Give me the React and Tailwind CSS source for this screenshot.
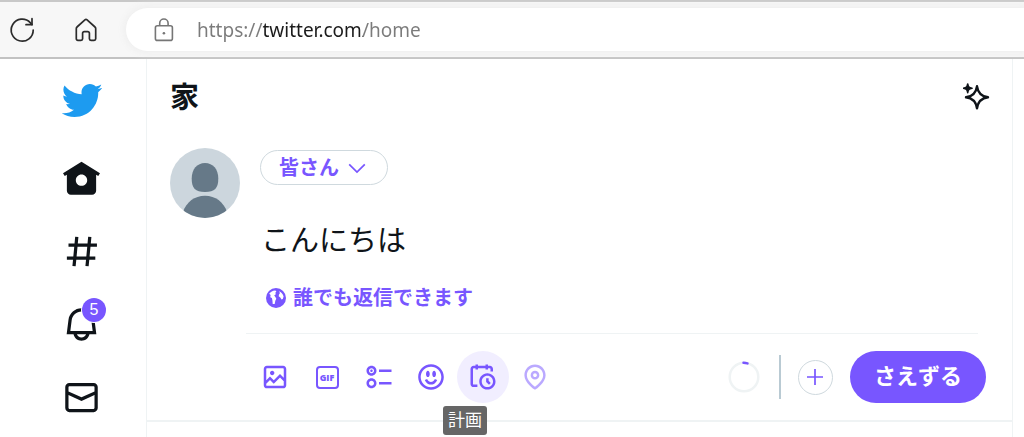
import React, { useState } from 'react';

const toolbarIcons = {
  image:
    'M3 5.5C3 4.119 4.119 3 5.5 3h13C19.881 3 21 4.119 21 5.5v13c0 1.381-1.119 2.5-2.5 2.5h-13C4.119 21 3 19.881 3 18.5v-13zM5.5 5c-.276 0-.5.224-.5.5v9.086l3-3 3 3 5-5 3 3V5.5c0-.276-.224-.5-.5-.5h-13zM19 15.414l-3-3-5 5-3-3-3 3V18.5c0 .276.224.5.5.5h13c.276 0 .5-.224.5-.5v-3.086zM9.75 7C8.784 7 8 7.784 8 8.75s.784 1.75 1.75 1.75 1.75-.784 1.75-1.75S10.716 7 9.75 7z',
  poll:
    'M6 5c-1.1 0-2 .895-2 2s.9 2 2 2 2-.895 2-2-.9-2-2-2zM2 7c0-2.209 1.79-4 4-4s4 1.791 4 4-1.79 4-4 4-4-1.791-4-4zm20 1H12V6h10v2zM6 15c-1.1 0-2 .895-2 2s.9 2 2 2 2-.895 2-2-.9-2-2-2zm-4 2c0-2.209 1.79-4 4-4s4 1.791 4 4-1.79 4-4 4-4-1.791-4-4zm20 1H12v-2h10v2zM7 7c0 .552-.45 1-1 1s-1-.448-1-1 .45-1 1-1 1 .448 1 1z',
  emoji:
    'M8 9.5C8 8.119 8.672 7 9.5 7S11 8.119 11 9.5 10.328 12 9.5 12 8 10.881 8 9.5zm6.5 2.5c.828 0 1.5-1.119 1.5-2.5S15.328 7 14.5 7 13 8.119 13 9.5s.672 2.5 1.5 2.5zM12 16c-2.224 0-3.021-2.227-3.051-2.316l-1.897.633c.05.15 1.271 3.684 4.949 3.684s4.898-3.533 4.949-3.684l-1.896-.638c-.033.095-.83 2.322-3.053 2.322zm10.25-4.001c0 5.652-4.598 10.25-10.25 10.25S1.75 17.652 1.75 12 6.348 1.75 12 1.75 22.25 6.348 22.25 12zm-2 0c0-4.549-3.701-8.25-8.25-8.25S3.75 7.451 3.75 12s3.701 8.25 8.25 8.25 8.25-3.701 8.25-8.25z',
  schedule:
    'M6 3V2h2v1h6V2h2v1h1.5C18.88 3 20 4.119 20 5.5v2h-2v-2c0-.276-.22-.5-.5-.5H16v1h-2V5H8v1H6V5H4.5c-.28 0-.5.224-.5.5v12c0 .276.22.5.5.5h3v2h-3C3.12 20 2 18.881 2 17.5v-12C2 4.119 3.12 3 4.5 3H6zm9.5 8c-2.49 0-4.5 2.015-4.5 4.5s2.01 4.5 4.5 4.5 4.5-2.015 4.5-4.5-2.01-4.5-4.5-4.5zM9 15.5C9 11.91 11.91 9 15.5 9s6.5 2.91 6.5 6.5-2.91 6.5-6.5 6.5S9 19.09 9 15.5zm5.5-2.5h2v2.086l1.71 1.707-1.42 1.414-2.29-2.293V13z',
  location:
    'M12 7c-1.93 0-3.5 1.57-3.5 3.5S10.07 14 12 14s3.5-1.57 3.5-3.5S13.93 7 12 7zm0 5c-.827 0-1.5-.673-1.5-1.5S11.173 9 12 9s1.5.673 1.5 1.5S12.827 12 12 12zm0-10c-4.687 0-8.5 3.813-8.5 8.5 0 5.967 7.621 11.116 7.945 11.332l.555.37.555-.37c.324-.216 7.945-5.365 7.945-11.332C20.5 5.813 16.687 2 12 2zm0 17.77c-1.665-1.241-6.5-5.196-6.5-9.27C5.5 6.916 8.416 4 12 4s6.5 2.916 6.5 6.5c0 4.073-4.835 8.028-6.5 9.27z',
};

const navItems = [
  {
    id: 'home',
    path: 'M12 1.696L.622 8.807l1.06 1.696L3 9.679V19.5C3 20.881 4.119 22 5.5 22h13c1.381 0 2.5-1.119 2.5-2.5V9.679l1.318.824 1.06-1.696L12 1.696zM12 16.5c-1.933 0-3.5-1.567-3.5-3.5s1.567-3.5 3.5-3.5 3.5 1.567 3.5 3.5-1.567 3.5-3.5 3.5z',
  },
  {
    id: 'explore',
    path: 'M10.09 3.098L9.72 7h5.99l.39-4.089 1.99.187L17.72 7h3.78v2h-3.97l-.56 6h3.53v2h-3.72l-.38 4.089-1.99-.187.37-3.902H8.79l-.39 4.089-1.99-.187L6.78 17H3v-2h3.97l.56-6H4V7h3.72l.38-4.089 1.99.187zM14.97 15l.56-6H9.54l-.56 6h5.99z',
  },
  {
    id: 'notifications',
    badge: 5,
    path: 'M19.993 9.042C19.48 5.017 16.054 2 11.996 2s-7.49 3.021-7.999 7.051L2.866 18H7.1c.463 2.282 2.481 4 4.9 4s4.437-1.718 4.9-4h4.236l-1.143-8.958zM12 20c-1.306 0-2.417-.835-2.829-2h5.658c-.412 1.165-1.523 2-2.829 2zm-6.866-4l.847-6.698C6.364 6.272 8.941 4 11.996 4s5.627 2.268 6.013 5.295L18.864 16H5.134z',
  },
  {
    id: 'messages',
    path: 'M1.998 5.5c0-1.381 1.119-2.5 2.5-2.5h15c1.381 0 2.5 1.119 2.5 2.5v13c0 1.381-1.119 2.5-2.5 2.5h-15c-1.381 0-2.5-1.119-2.5-2.5v-13zm2.5-.5c-.276 0-.5.224-.5.5v2.764l8 3.638 8-3.636V5.5c0-.276-.224-.5-.5-.5h-15zm15.5 5.463l-8 3.636-8-3.638V18.5c0 .276.224.5.5.5h15c.276 0 .5-.224.5-.5v-8.037z',
  },
];

function BrowserBar() {
  const [url, setUrl] = useState('https://twitter.com/home');

  return (
    <div className="flex items-center border-t-2 border-b-2 border-t-[#c8c8c8] border-b-[#c2c2c2] bg-[#f7f7f7] py-[6px] pl-2">
      <button aria-label="reload" className="text-[#2b2b2b]">
        <svg viewBox="0 0 28 28" className="size-7" fill="none" stroke="currentColor" strokeWidth="1.7" strokeLinecap="round" strokeLinejoin="round">
          <path d="M25.2 14A11 11 0 1 1 22.2 6.6L24 8.6" />
          <path d="M24 2.7v6h-6" />
        </svg>
      </button>
      <button aria-label="browser home" className="ml-9 text-[#2b2b2b]">
        <svg viewBox="0 0 28 28" className="size-7" fill="none" stroke="currentColor" strokeWidth="1.7" strokeLinejoin="round">
          <path d="M4.3 12.5a2 2 0 0 1 .7-1.5L12.900 3.800a1.600 1.600 0 0 1 2.200 0L23 11a2 2 0 0 1 .7 1.500v10.200a1.600 1.600 0 0 1-1.600 1.600h-3.100a1.600 1.600 0 0 1-1.600-1.600v-5.400a1.600 1.600 0 0 0-1.600-1.600h-3.600a1.600 1.600 0 0 0-1.600 1.600v5.400a1.600 1.600 0 0 1-1.600 1.600H5.900a1.600 1.600 0 0 1-1.600-1.600z" />
        </svg>
      </button>
      <label className="ml-[26px] flex h-[43px] flex-1 items-center rounded-l-full bg-white pl-6 shadow-[0_0_6px_3px_#f0f0f0]">
        <svg viewBox="0 0 28 28" className="size-7 shrink-0 text-[#767676]" fill="none" stroke="currentColor" strokeWidth="1.6">
          <rect x="5.4" y="9.8" width="17" height="14.6" rx="2" />
          <path d="M9.7 9.8V7.2a4.2 4.2 0 0 1 8.4 0v2.6" />
          <circle cx="13.9" cy="17.2" r="1.3" fill="currentColor" stroke="none" />
        </svg>
        {/* host name is darker than the rest of the address */}
        <input
          aria-label="address"
          value={url}
          onChange={(e) => setUrl(e.target.value)}
          className="ml-[19px] min-w-0 flex-1 bg-[linear-gradient(90deg,#7b7b7b_66px,#1b1b1b_66px,#1b1b1b_166px,#7b7b7b_166px)] bg-clip-text font-['Noto_Sans',sans-serif] text-[19px] leading-7 text-transparent caret-black outline-none"
        />
      </label>
    </div>
  );
}

function Sidebar() {
  return (
    <nav className="flex w-[146px] shrink-0 flex-col items-center pt-5 pl-[17px]">
      <a href="#top" aria-label="Twitter" className="text-[#1d9bf0]">
        <svg viewBox="0 0 24 24" className="size-[43px]" fill="currentColor">
          <path d="M23.643 4.937c-.835.37-1.732.62-2.675.733.962-.576 1.7-1.49 2.048-2.578-.9.534-1.897.922-2.958 1.13-.85-.904-2.06-1.47-3.4-1.47-2.572 0-4.658 2.086-4.658 4.66 0 .364.042.718.12 1.06-3.873-.195-7.304-2.05-9.602-4.868-.4.69-.63 1.49-.63 2.342 0 1.616.823 3.043 2.072 3.878-.764-.025-1.482-.234-2.11-.583v.06c0 2.257 1.605 4.14 3.737 4.568-.392.106-.803.162-1.227.162-.3 0-.593-.028-.877-.082.593 1.85 2.313 3.198 4.352 3.234-1.595 1.25-3.604 1.995-5.786 1.995-.376 0-.747-.022-1.112-.065 2.062 1.323 4.51 2.093 7.14 2.093 8.57 0 13.255-7.098 13.255-13.254 0-.2-.005-.402-.014-.602.91-.658 1.7-1.477 2.323-2.41z" />
        </svg>
      </a>
      <div className="flex flex-col gap-[34px] pt-[37px]">
        {navItems.map((item) => (
          <a key={item.id} href={`#${item.id}`} aria-label={item.id} className="relative text-[#0f1419]">
            <svg viewBox="0 0 24 24" className="size-[39px]" fill="currentColor">
              <path d={item.path} />
            </svg>
            {item.badge && (
              <span className="absolute -top-[7px] -right-[5px] flex size-6 items-center justify-center rounded-full bg-[#7856ff] text-base leading-none text-white ring-1 ring-white">
                {item.badge}
              </span>
            )}
          </a>
        ))}
      </div>
    </nav>
  );
}

function Avatar() {
  return (
    <svg viewBox="0 0 70 70" className="size-[70px] shrink-0 rounded-full bg-[#ccd6dd] text-[#667988]" fill="currentColor">
      <path d="M35 15c8 0 13.3 6.3 13.3 15.5 0 9.8-3.6 13.5-13.3 13.5s-13.3-3.7-13.3-13.500C21.7 21.3 27 15 35 15z" />
      <path d="M35 47.700c10.500 0 18.500 6.300 22 16V70H13v-6.300c3.500-9.700 11.500-16 22-16z" />
    </svg>
  );
}

function ToolButton({ label, icon, disabled }) {
  return (
    <button aria-label={label} disabled={disabled} className="flex size-[52px] items-center justify-center rounded-full disabled:opacity-50">
      <svg viewBox="0 0 24 24" className="size-[30px]" fill="currentColor">
        <path d={toolbarIcons[icon]} />
      </svg>
    </button>
  );
}

function Toolbar() {
  return (
    <div className="flex items-center pt-[17px] pb-[17px] pl-[3px] text-[#7856ff]">
      <ToolButton label="image" icon="image" />
      <button className="flex size-[52px] items-center justify-center rounded-full">
        <span className="flex size-[23px] items-center justify-center rounded-[4px] border-2 border-current font-['Open_Sans',sans-serif] text-[9px] leading-none font-extrabold">
          GIF
        </span>
      </button>
      <ToolButton label="poll" icon="poll" />
      <ToolButton label="emoji" icon="emoji" />
      <div className="relative rounded-full bg-[#f1eeff]">
        <ToolButton label="schedule" icon="schedule" />
        <span role="tooltip" className="absolute top-[55px] -left-[14px] z-10 rounded-[3px] bg-[#666666] px-[5px] text-[17px] leading-[29px] whitespace-nowrap text-white">
          計画
        </span>
      </div>
      <ToolButton label="location" icon="location" disabled />

      <div className="ml-auto flex items-center">
        <svg viewBox="0 0 32 32" className="size-8" fill="none" strokeWidth="2.5">
          <circle cx="16" cy="16" r="14.3" stroke="#eff3f4" />
          <path d="M15.5 1.8a14.3 14.3 0 0 1 4 .6" stroke="#7856ff" strokeLinecap="round" />
        </svg>
        <div className="ml-[19px] h-11 w-[2px] bg-[#b9cad3]" />
        <button aria-label="add tweet" className="ml-[17px] flex size-[35px] items-center justify-center rounded-full border border-[#cfd9de]">
          <svg viewBox="0 0 16 16" className="size-4" stroke="currentColor" strokeWidth="1.7">
            <path d="M8 0v16M0 8h16" />
          </svg>
        </button>
        <button className="ml-[17px] h-[52px] rounded-full bg-[#7856ff] px-6 text-[22px] leading-7 font-bold text-white">
          さえずる
        </button>
      </div>
    </div>
  );
}

function Composer() {
  const [text, setText] = useState('こんにちは');

  return (
    <section className="flex gap-[6px] border-b-2 border-[#eff3f4] pt-[13px] pr-[26px] pl-[23px]">
      <Avatar />
      <div className="min-w-0 flex-1">
        <div className="pt-[2px] pl-[14px]">
          <button className="flex h-[35px] items-center gap-[9px] rounded-full border border-[#cfd9de] pr-[21px] pl-[18px] text-xl leading-7 font-bold text-[#7856ff]">
            皆さん
            <svg viewBox="0 0 18 18" className="size-[18px]" fill="none" stroke="currentColor" strokeWidth="1.7">
              <path d="M1.2 5.3L9 13l7.8-7.7" />
            </svg>
          </button>
          <textarea
            aria-label="tweet"
            rows={1}
            value={text}
            onChange={(e) => setText(e.target.value)}
            className="mt-9 block w-full resize-none overflow-hidden pl-px text-[29px] leading-10 text-[#0f1419] outline-none"
          />
          <button className="mt-[25px] flex items-center gap-[7px] pl-[6px] text-xl leading-6 font-bold text-[#7856ff]">
            <svg viewBox="0 0 20 20" className="size-5">
              <circle cx="10" cy="10" r="10" fill="currentColor" />
              <path d="M3.2 5.8C4.6 3.8 6.7 2.600 9.200 2.400l1.200.9-1 1.500.4 1.500-1.600 1.300 1.200 1.500.9 1.700-1 1.900-.6 3.200-2 .2-.3-3.900-.5-2.200-1.600-.7.3-2.300z" fill="#fff" />
              <path d="M12.900 3.200c2.300.9 4.100 2.900 4.700 5.300l-.8 2.400-1.300.7-1.200-2-1.600-1.400.3-1.800 1-1.400z" fill="#fff" />
            </svg>
            誰でも返信できます
          </button>
        </div>
        <hr className="mt-[23px] mr-2 border-[#eff3f4]" />
        <Toolbar />
      </div>
    </section>
  );
}

export default function App() {
  return (
    <div className="flex min-h-screen flex-col bg-white font-['Liberation_Sans','Noto_Sans_CJK_JP',sans-serif]">
      <BrowserBar />
      <div className="flex flex-1">
        <Sidebar />
        <main className="mr-[11px] min-w-0 flex-1 border-x border-[#eff3f4]">
          <header className="flex h-[76px] items-center justify-between pr-[21px] pl-[23px]">
            <h1 className="pt-[2px] text-[29px] leading-9 font-bold text-[#0f1419]">家</h1>
            <button aria-label="top tweets" className="text-[#0f1419]">
              <svg viewBox="0 0 28 28" className="size-7" fill="none" stroke="currentColor" strokeWidth="2.4" strokeLinejoin="round">
                <path d="M14 3.3C14.9 9.8 18.5 13.4 25 14.3C18.5 15.2 14.9 18.8 14 25.3C13.1 18.8 9.5 15.2 3 14.3C9.5 13.4 13.1 9.8 14 3.3z" />
                <path d="M4.700 1C5.200 4 6 4.800 9 5.300C6 5.800 5.200 6.600 4.700 9.600C4.200 6.600 3.400 5.800.400 5.300C3.400 4.800 4.200 4 4.700 1z" fill="currentColor" strokeWidth="1.6" />
              </svg>
            </button>
          </header>
          <Composer />
        </main>
      </div>
    </div>
  );
}
